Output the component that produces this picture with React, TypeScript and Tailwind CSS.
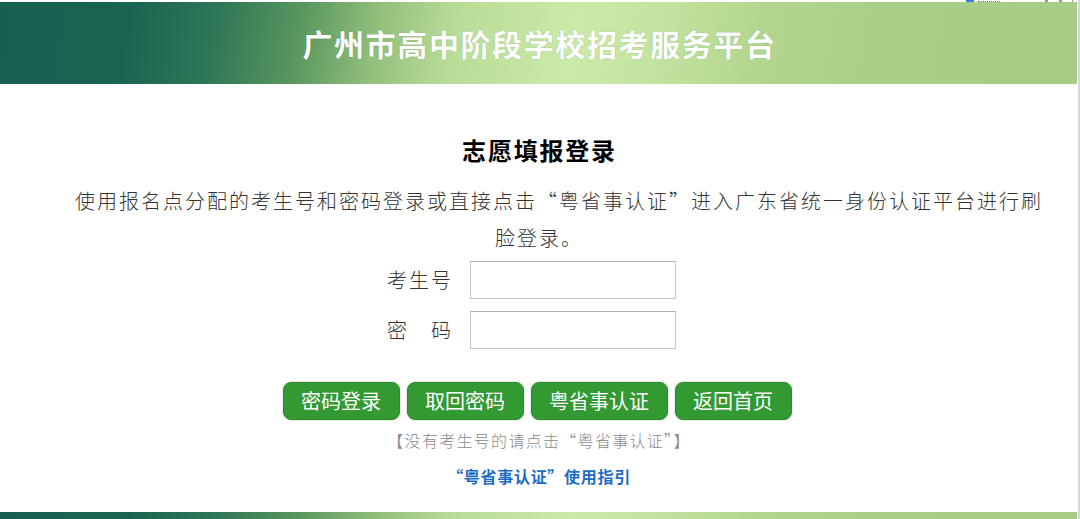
import React from "react";

const cjk = "font-['Noto_Sans_CJK_SC',sans-serif]";

const grad =
  "bg-[linear-gradient(100deg,#15604f_0%,#1a6552_12%,#2e7657_20%,#5a975f_28%,#92bf7a_35%,#b8dc98_42%,#cbeaa8_53%,#c4e5a1_60%,#b2d690_70%,#a9ce87_82%,#a7cc85_100%)]";

function Btn({ children, w }: { children: React.ReactNode; w: string }) {
  return (
    <button
      className={`${w} h-[38px] rounded-[8px] bg-[#339933] border border-[#2b8a2b] text-white text-[20px] leading-none flex items-center justify-center shadow-[0_0_0_1px_rgba(0,0,0,0.08)]`}
    >
      {children}
    </button>
  );
}

export default function App() {
  return (
    <div className={`w-[1080px] h-[519px] overflow-hidden bg-white border-r-2 border-[#d6d6d6] flex flex-col ${cjk}`}>
      {/* top strip with cut-off marks */}
      <div className="h-[2px] flex items-end shrink-0">
        <div className="ml-[966px] w-[8px] h-[2px] bg-[#3b7fd6]" />
        <div className="ml-[4px] w-[22px] h-[1px] border-b border-dotted border-[#3b7fd6]" />
        <div className="ml-[45px] w-[3px] h-[2px] bg-[#999]" />
        <div className="ml-[11px] w-[3px] h-[2px] bg-[#999]" />
        <div className="ml-[10px] w-[1px] h-[2px] bg-[#999]" />
      </div>

      {/* header */}
      <header className={`w-[1077px] h-[82px] shrink-0 flex items-center justify-center ${grad}`}>
        <h1 className="text-white text-[30px] font-bold leading-none tracking-[1.6px] pl-[2px] [text-shadow:0_0_1px_rgba(20,70,60,0.35)]">
          广州市高中阶段学校招考服务平台
        </h1>
      </header>

      {/* main */}
      <main className="flex-1 flex flex-col items-center pt-[50px]">
        <h2 className="text-[24px] leading-[32px] font-bold text-black tracking-[1.8px] pl-[1px]">志愿填报登录</h2>

        <p className="mt-[16px] w-[1014px] text-center indent-[2em] text-[20px] leading-[37px] tracking-[2px] text-[#333] font-light">
          使用报名点分配的考生号和密码登录或直接点击“粤省事认证”进入广东省统一身份认证平台进行刷脸登录。
        </p>

        <div className="mt-[5px] pr-[33px] flex flex-col gap-[12px]">
          <div className="flex items-center">
            <label className="w-[84px] text-right text-[20px] tracking-[2px] text-[#333] font-light">考生号</label>
            <input className="ml-[17px] w-[206px] h-[38px] border border-[#c4c4c4] border-t-[#b0b0b0] bg-white outline-none" />
          </div>
          <div className="flex items-center">
            <label className="w-[84px] text-right text-[20px] tracking-[2px] text-[#333] font-light">密　码</label>
            <input type="password" className="ml-[17px] w-[206px] h-[38px] border border-[#c4c4c4] border-t-[#b0b0b0] bg-white outline-none" />
          </div>
        </div>

        <div className="mt-[33px] flex gap-[7px] pr-[4px]">
          <Btn w="w-[117px]">密码登录</Btn>
          <Btn w="w-[117px]">取回密码</Btn>
          <Btn w="w-[137px]">粤省事认证</Btn>
          <Btn w="w-[117px]">返回首页</Btn>
        </div>

        <p className="mt-[8px] text-[16px] leading-[24px] tracking-[1.3px] text-[#8a8a8a] font-light">
          【没有考生号的请点击“粤省事认证”】
        </p>

        <a className="mt-[12px] text-[16px] leading-[24px] font-bold tracking-[0.7px] text-[#1c6cc4]">
          “粤省事认证”使用指引
        </a>
      </main>

      <footer className={`w-[1077px] h-[7px] shrink-0 ${grad}`} />
    </div>
  );
}
